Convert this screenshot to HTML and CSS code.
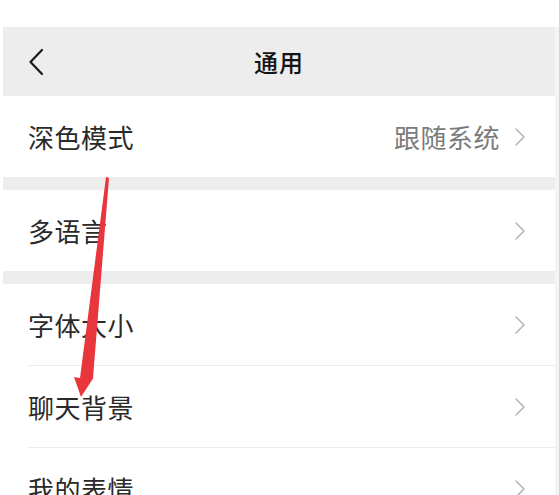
FILE: index.html
```html
<!DOCTYPE html>
<html lang="zh-CN">
<head>
<meta charset="utf-8">
<title>通用</title>
<link rel="stylesheet" href="styles.css">
</head>
<body>
<div class="frame">
  <div class="screen">
    <header class="nav">
      <svg class="back" width="16" height="28" viewBox="0 0 16 28"><path d="M14 2 L2.5 14 L14 26" fill="none" stroke="#1a1a1a" stroke-width="2.2" stroke-linecap="round" stroke-linejoin="round"/></svg>
      <h1 class="title">通用</h1>
    </header>
    <section class="group">
      <div class="row"><span class="label">深色模式</span><span class="value">跟随系统</span><svg class="chev" width="12" height="20" viewBox="0 0 12 20"><path d="M2 2 L10 10 L2 18" fill="none" stroke="#b4b4b4" stroke-width="1.6" stroke-linecap="round" stroke-linejoin="round"/></svg></div>
    </section>
    <section class="group">
      <div class="row"><span class="label">多语言</span><svg class="chev" width="12" height="20" viewBox="0 0 12 20"><path d="M2 2 L10 10 L2 18" fill="none" stroke="#b4b4b4" stroke-width="1.6" stroke-linecap="round" stroke-linejoin="round"/></svg></div>
    </section>
    <section class="group">
      <div class="row"><span class="label">字体大小</span><svg class="chev" width="12" height="20" viewBox="0 0 12 20"><path d="M2 2 L10 10 L2 18" fill="none" stroke="#b4b4b4" stroke-width="1.6" stroke-linecap="round" stroke-linejoin="round"/></svg></div>
      <div class="row"><span class="label">聊天背景</span><svg class="chev" width="12" height="20" viewBox="0 0 12 20"><path d="M2 2 L10 10 L2 18" fill="none" stroke="#b4b4b4" stroke-width="1.6" stroke-linecap="round" stroke-linejoin="round"/></svg></div>
      <div class="row"><span class="label">我的表情</span><svg class="chev" width="12" height="20" viewBox="0 0 12 20"><path d="M2 2 L10 10 L2 18" fill="none" stroke="#b4b4b4" stroke-width="1.6" stroke-linecap="round" stroke-linejoin="round"/></svg></div>
    </section>
  </div>
  <div class="strip"></div>
  <svg class="arrow" width="559" height="495" viewBox="0 0 559 495"><path d="M106 177 L109 178 L93 378 L94 377 L81 397 L74 377 L80 378 Z" fill="#e8363c"/></svg>
</div>
</body>
</html>
```
FILE: styles.css
```css
html, body {
  margin: 0;
  padding: 0;
  background: #ffffff;
  overflow: hidden;
}
body {
  width: 559px;
  height: 495px;
  font-family: "Noto Sans CJK SC", "Noto Sans", sans-serif;
}
.frame {
  position: relative;
  display: flex;
  padding-top: 27px;
  padding-left: 3px;
  height: 468px;
  overflow: hidden;
}
.screen {
  width: 552px;
  background: #ededed;
  display: flex;
  flex-direction: column;
}
.screen > * {
  flex-shrink: 0;
}
.strip {
  flex: 1;
  background: #f4f4f4;
}
.nav {
  height: 69px;
  display: flex;
  align-items: center;
  justify-content: center;
  position: relative;
}
.back {
  position: absolute;
  left: 25px;
  top: 21px;
}
.title {
  margin: 0;
  font-size: 24px;
  font-weight: 500;
  color: #141414;
  letter-spacing: 1px;
}
.group {
  background: #ffffff;
  margin-bottom: 13px;
}
.row {
  height: 81px;
  display: flex;
  align-items: center;
  padding: 0 29px 0 25px;
  border-top: 1px solid #ececec;
}
.group .row:first-child {
  border-top: none;
}
.group .row + .row {
  margin-left: 25px;
  padding-left: 0;
}
.label {
  flex: 1;
  font-size: 26px;
  color: #2a2a2a;
  letter-spacing: 0.5px;
}
.value {
  font-size: 26px;
  color: #7b7b7b;
  margin-right: 14px;
  letter-spacing: 0.5px;
}
.chev {
  display: block;
}
.arrow {
  position: absolute;
  left: 0;
  top: 0;
  pointer-events: none;
}
```
